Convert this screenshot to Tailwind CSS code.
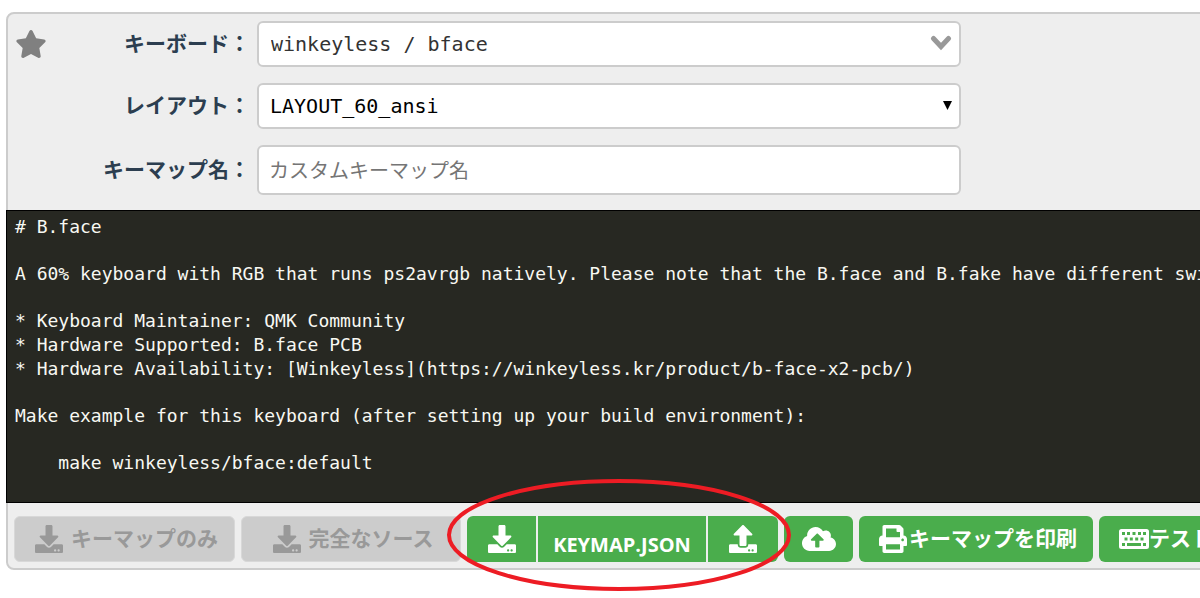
<!DOCTYPE html>
<html lang="ja">
<head>
<meta charset="utf-8">
<meta name="viewport" content="width=device-width, initial-scale=1">
<title>Keymap Configurator</title>
<script src="https://cdn.jsdelivr.net/npm/@tailwindcss/browser@4"></script>
</head>
<body class="flow-root min-h-screen overflow-x-hidden bg-white font-['Open_Sans','Noto_Sans_CJK_JP',sans-serif] text-[21px] text-[#2c3e50]">
<svg class="hidden">
  <symbol id="download" viewBox="0 0 512 512"><path d="M216 0h80c13.3 0 24 10.7 24 24v168h87.7c17.8 0 26.7 21.5 14.1 34.1L269.700 378.300c-7.500 7.500-19.800 7.500-27.300 0L90.100 226.100c-12.600-12.600-3.700-34.100 14.100-34.100H192V24c0-13.300 10.700-24 24-24zm296 376v112c0 13.300-10.700 24-24 24H24c-13.300 0-24-10.700-24-24V376c0-13.300 10.700-24 24-24h146.700l49 49c20.100 20.100 52.500 20.100 72.600 0l49-49H488c13.300 0 24 10.700 24 24zm-124 88c0-11-9-20-20-20s-20 9-20 20 9 20 20 20 20-9 20-20zm64 0c0-11-9-20-20-20s-20 9-20 20 9 20 20 20 20-9 20-20z"/></symbol>
  <symbol id="upload" viewBox="0 0 512 512"><path d="M296 384h-80c-13.300 0-24-10.700-24-24V192h-87.700c-17.800 0-26.700-21.500-14.100-34.100L242.300 5.700c7.500-7.500 19.800-7.500 27.300 0l152.200 152.200c12.600 12.600 3.700 34.100-14.100 34.100H320v168c0 13.300-10.700 24-24 24zm216-8v112c0 13.300-10.700 24-24 24H24c-13.300 0-24-10.700-24-24V376c0-13.300 10.700-24 24-24h136v8c0 30.900 25.100 56 56 56h80c30.900 0 56-25.100 56-56v-8h136c13.300 0 24 10.700 24 24zm-124 88c0-11-9-20-20-20s-20 9-20 20 9 20 20 20 20-9 20-20zm64 0c0-11-9-20-20-20s-20 9-20 20 9 20 20 20 20-9 20-20z"/></symbol>
</svg>

<main class="relative mt-3 ml-[6px] -mr-2 rounded-lg border-2 border-[#ccc] bg-[#eee]">
  <form class="flex flex-col gap-4 pt-[7px] pb-[15px]">
    <div class="flex items-center">
      <button type="button" aria-label="お気に入り" class="ml-[7px] flex w-8 shrink-0 text-[#808080]">
        <svg class="h-7 w-8" viewBox="0 0 576 512" fill="currentColor"><path d="M259.300 17.800L194 150.200 47.900 171.500c-26.200 3.800-36.700 36.100-17.700 54.600l105.700 103-25 145.500c-4.500 26.300 23.200 46 46.400 33.700L288 439.600l130.700 68.700c23.200 12.200 50.900-7.400 46.400-33.700l-25-145.500 105.700-103c19-18.500 8.500-50.800-17.700-54.600L382 150.200 316.700 17.800c-11.700-23.600-45.600-23.900-57.400 0z"/></svg>
      </button>
      <label for="keyboard" class="w-[203px] shrink-0 text-right font-bold whitespace-nowrap">キーボード：</label>
      <div class="relative ml-[7px] w-[704px]">
        <input id="keyboard" type="text" value="winkeyless / bface" class="h-[46px] w-full rounded-md border-2 border-[#ccc] bg-white pr-12 pl-3 font-['DejaVu_Sans_Mono',monospace] text-xl text-[#333]">
        <svg class="pointer-events-none absolute top-[14px] right-[9px] h-4 w-[22px]" viewBox="0 0 22 16" fill="none" stroke="#999" stroke-width="5" stroke-linecap="round"><path d="M3.500 3.500L11 11.500L18.500 3.500"/></svg>
      </div>
    </div>
    <div class="flex items-center">
      <label for="layout" class="w-[242px] shrink-0 text-right font-bold whitespace-nowrap">レイアウト：</label>
      <div class="relative ml-[7px] w-[704px]">
        <select id="layout" class="h-[46px] w-full appearance-none rounded-md border-2 border-[#ccc] bg-white px-[11px] font-['DejaVu_Sans_Mono',monospace] text-xl text-black"><option>LAYOUT_60_ansi</option></select>
        <svg class="pointer-events-none absolute top-[18px] right-[9px] h-[9px] w-[9px]" viewBox="0 0 9 9"><path d="M0 0H9L4.500 9Z"/></svg>
      </div>
    </div>
    <div class="flex items-center">
      <label for="name" class="w-[242px] shrink-0 text-right font-bold whitespace-nowrap">キーマップ名：</label>
      <input id="name" type="text" placeholder="カスタムキーマップ名" class="ml-[7px] h-[50px] w-[704px] rounded-md border-2 border-[#ccc] bg-white px-[10px] text-xl placeholder:text-[#757575]">
    </div>
  </form>

  <section aria-label="Readme" class="-ml-[2px] flex h-[293px] flex-col gap-[23px] overflow-hidden border border-black bg-[#272822] pt-1 pl-2 font-['DejaVu_Sans_Mono',monospace] text-lg leading-6 whitespace-pre text-[#f8f8f2]">
    <p># B.face</p>
    <p>A 60% keyboard with RGB that runs ps2avrgb natively. Please note that the B.face and B.fake have different switch</p>
    <p>* Keyboard Maintainer: QMK Community
* Hardware Supported: B.face PCB
* Hardware Availability: [Winkeyless](https://winkeyless.kr/product/b-face-x2-pcb/)</p>
    <p>Make example for this keyboard (after setting up your build environment):</p>
    <p>    make winkeyless/bface:default</p>
    <p>See [build environment setup](https://docs.qmk.fm/build_environment_setup.html) then the [make instructions]</p>
  </section>

  <div class="flex gap-[6px] pt-[13px] pb-[6px] pl-[6px] font-bold whitespace-nowrap">
    <button type="button" disabled class="flex h-[46px] w-[221px] shrink-0 items-center justify-center gap-2 rounded-md border border-[#d8d8d8] bg-[#ccc] pl-1 text-[#999]"><svg class="h-7 w-7" fill="currentColor"><use href="#download"/></svg>キーマップのみ</button>
    <button type="button" disabled class="flex h-[46px] w-[220px] shrink-0 items-center justify-center gap-2 rounded-md border border-[#d8d8d8] bg-[#ccc] pl-1 text-[#999]"><svg class="h-7 w-7" fill="currentColor"><use href="#download"/></svg>完全なソース</button>
    <div class="flex h-[46px] w-[311px] shrink-0 gap-[2px] text-white">
      <button type="button" aria-label="ダウンロード" class="flex w-[69px] items-center justify-center rounded-l-md bg-[#4aad4c]"><svg class="h-7 w-7" fill="currentColor"><use href="#download"/></svg></button>
      <button type="button" class="flex-1 bg-[#4aad4c] pt-3 text-xl leading-8 font-bold">KEYMAP.JSON</button>
      <button type="button" aria-label="アップロード" class="flex w-[70px] items-center justify-center rounded-r-md bg-[#4aad4c]"><svg class="h-7 w-7" fill="currentColor"><use href="#upload"/></svg></button>
    </div>
    <button type="button" aria-label="クラウドへアップロード" class="flex h-[46px] w-[69px] shrink-0 items-center justify-center rounded-md bg-[#4aad4c] text-white"><svg class="h-7 w-[34px]" viewBox="0 0 640 512" fill="currentColor"><path d="M537.600 226.600c4.100-10.700 6.400-22.400 6.400-34.600 0-53-43-96-96-96-19.700 0-38.100 6-53.300 16.200C367 64.200 315.300 32 256 32c-88.400 0-160 71.600-160 160 0 2.700.1 5.400.2 8.100C40.200 219.800 0 273.200 0 336c0 79.500 64.500 144 144 144h368c70.700 0 128-57.300 128-128 0-61.900-44-113.600-102.400-125.400zM393.400 288H328v112c0 8.800-7.200 16-16 16h-48c-8.800 0-16-7.200-16-16V288h-65.400c-14.300 0-21.400-17.200-11.300-27.300l105.400-105.400c6.200-6.200 16.400-6.200 22.600 0l105.400 105.400c10.100 10.100 2.900 27.300-11.300 27.300z"/></svg></button>
    <button type="button" class="flex h-[46px] w-[234px] shrink-0 items-center justify-center gap-[2px] rounded-md bg-[#4aad4c] pl-1 text-white"><svg class="h-7 w-7" viewBox="0 0 512 512" fill="currentColor"><path d="M448 192V77.250c0-8.490-3.370-16.620-9.370-22.630L393.370 9.370c-6-6-14.140-9.370-22.630-9.370H96C78.330 0 64 14.330 64 32v160c-35.350 0-64 28.650-64 64v112c0 8.840 7.160 16 16 16h48v96c0 17.670 14.330 32 32 32h320c17.670 0 32-14.330 32-32v-96h48c8.840 0 16-7.160 16-16V256c0-35.350-28.650-64-64-64zm-64 256H128v-96h256v96zm0-224H128V64h192v48c0 8.840 7.160 16 16 16h48v96zm48 72c-13.250 0-24-10.750-24-24 0-13.260 10.750-24 24-24s24 10.740 24 24c0 13.250-10.750 24-24 24z"/></svg>キーマップを印刷</button>
    <button type="button" class="flex h-[46px] w-[150px] shrink-0 items-center rounded-l-md bg-[#4aad4c] pl-5 text-white"><svg class="h-7 w-[30px] shrink-0" viewBox="0 0 30 28" fill="currentColor"><path fill-rule="evenodd" d="M2.500 4H27.500A2.500 2.500 0 0 1 30 6.500V21.500A2.500 2.500 0 0 1 27.500 24H2.500A2.500 2.500 0 0 1 0 21.500V6.500A2.500 2.500 0 0 1 2.500 4ZM3 7v3h3v-3ZM8 7v3h3v-3ZM13.500 7v3h3v-3ZM19 7v3h3v-3ZM24 7v3h3v-3ZM5.500 12.500v3h3v-3ZM10.800 12.500v3h3v-3ZM16.200 12.500v3h3v-3ZM21.500 12.500v3h3v-3ZM3 18v3h3v-3ZM8 18v3h14v-3ZM24 18v3h3v-3Z"/></svg>テスト</button>
  </div>

  <svg class="pointer-events-none absolute bottom-[-25px] left-[437px] h-[116px] w-[348px]" viewBox="0 0 348 116" fill="none" stroke="#ed1c24" stroke-width="4"><ellipse cx="174" cy="58" rx="170" ry="54"/></svg>
</main>
</body>
</html>
